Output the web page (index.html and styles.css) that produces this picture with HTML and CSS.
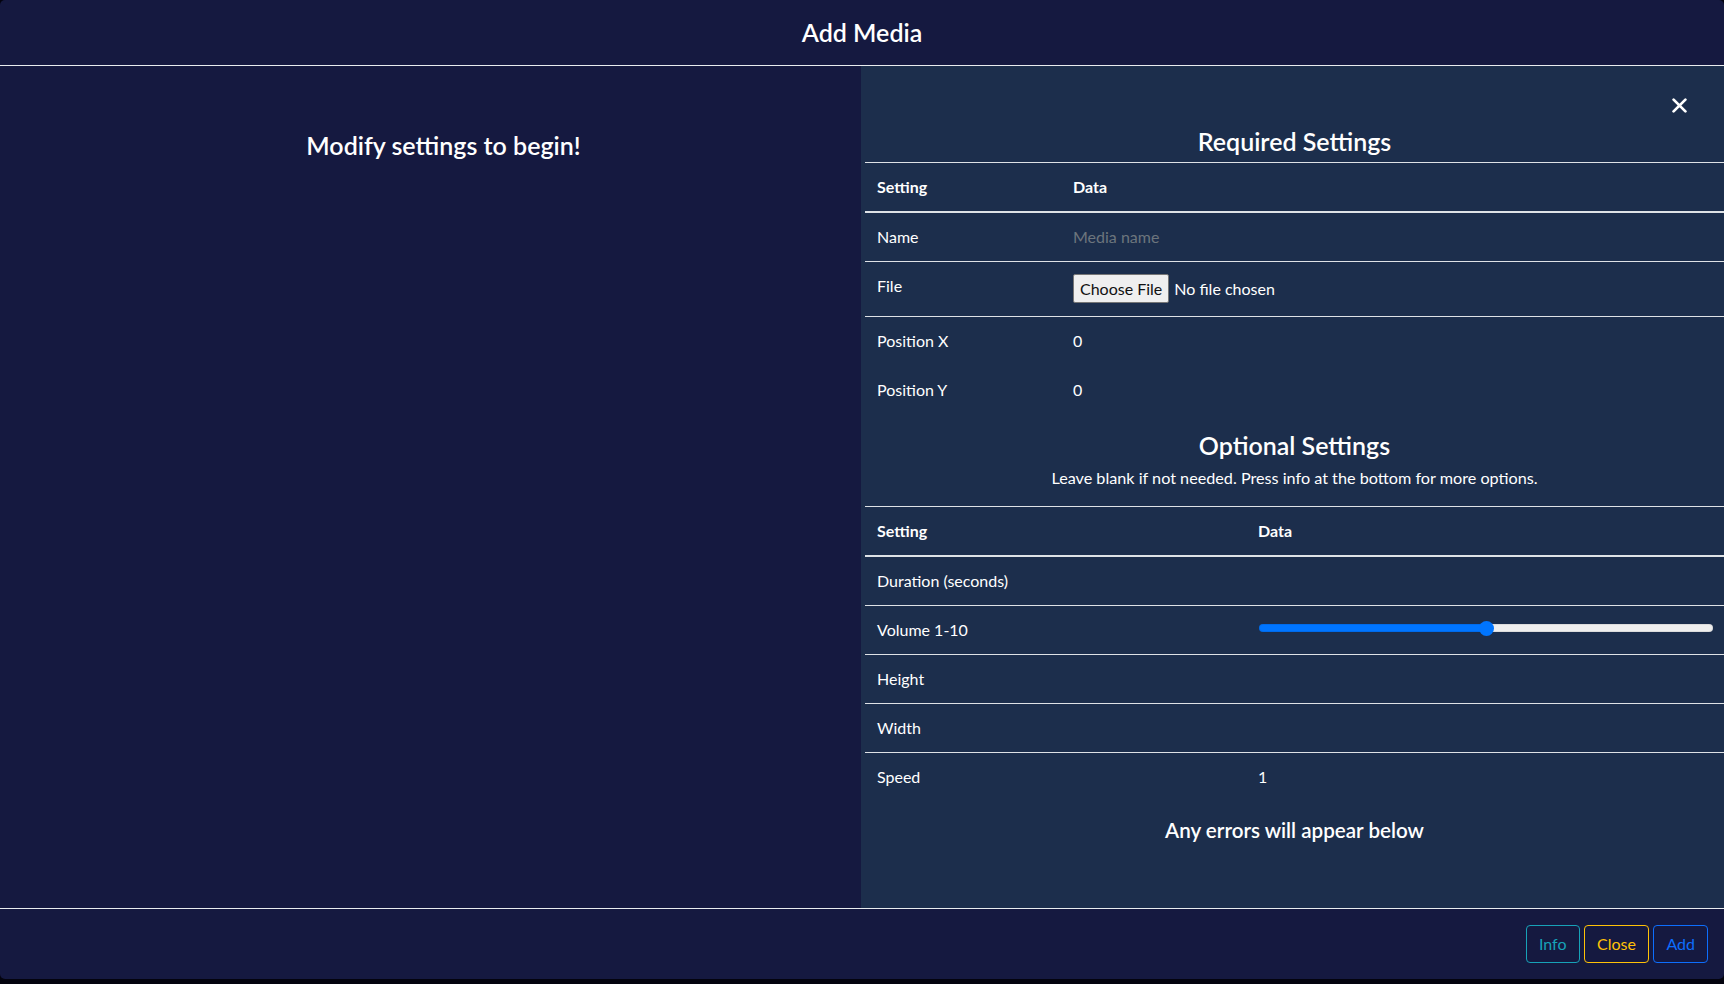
FILE: index.html
```html
<!DOCTYPE html>
<html lang="en">
<head>
<meta charset="utf-8">
<title>Add Media</title>
<link rel="stylesheet" href="styles.css">
</head>
<body>
<div class="modal">
  <header class="modal-header">
    <h1 class="modal-title">Add Media</h1>
  </header>
  <main class="modal-body">
    <section class="preview">
      <h2 class="preview-title">Modify settings to begin!</h2>
    </section>
    <section class="settings">
      <div class="close-row">
        <button class="btn-close" aria-label="Close">
          <svg viewBox="0 0 15 15" width="15" height="15"><path d="M1.6 1.6L13.4 13.4M13.4 1.6L1.6 13.4" stroke="#fff" stroke-width="2.7" stroke-linecap="round" fill="none"/></svg>
        </button>
      </div>
      <h3 class="section-title first">Required Settings</h3>
      <table class="table req">
        <thead>
          <tr><th class="c1">Setting</th><th>Data</th></tr>
        </thead>
        <tbody>
          <tr class="bordered"><td>Name</td><td><input class="text-input" type="text" placeholder="Media name"></td></tr>
          <tr class="bordered file-row"><td>File</td><td><input class="file-input" type="file"></td></tr>
          <tr><td>Position X</td><td>0</td></tr>
          <tr><td>Position Y</td><td>0</td></tr>
        </tbody>
      </table>
      <h3 class="section-title second">Optional Settings</h3>
      <p class="subtitle">Leave blank if not needed. Press info at the bottom for more options.</p>
      <table class="table opt">
        <thead>
          <tr><th class="c1">Setting</th><th>Data</th></tr>
        </thead>
        <tbody>
          <tr class="bordered"><td>Duration (seconds)</td><td></td></tr>
          <tr class="bordered"><td>Volume 1-10</td><td class="range-cell"><input class="range" type="range" min="0" max="10" value="5" style="--pct: 50%"></td></tr>
          <tr class="bordered"><td>Height</td><td></td></tr>
          <tr class="bordered"><td>Width</td><td></td></tr>
          <tr><td>Speed</td><td>1</td></tr>
        </tbody>
      </table>
      <h4 class="errors-title">Any errors will appear below</h4>
    </section>
  </main>
  <footer class="modal-footer">
    <button class="btn btn-info">Info</button>
    <button class="btn btn-warning">Close</button>
    <button class="btn btn-primary">Add</button>
  </footer>
</div>
</body>
</html>
```

FILE: styles.css
```css
* { box-sizing: border-box; }

html, body {
  margin: 0;
  padding: 0;
  height: 100%;
}

body {
  background: #03030e;
  font-family: "Lato", "Segoe UI", "Noto Sans", sans-serif;
  font-size: 16px;
  line-height: 24px;
  color: #ffffff;
  overflow: hidden;
}

.modal {
  height: 979px;
  width: 1724px;
  display: flex;
  flex-direction: column;
  background: #151940;
  border-radius: 5px;
  overflow: hidden;
}

.modal-header {
  height: 66px;
  flex: 0 0 66px;
  border-bottom: 1px solid #e9ecef;
  display: flex;
  align-items: center;
  justify-content: center;
  padding-bottom: 1px;
}

.modal-title {
  margin: 0;
  font-size: 25px;
  font-weight: 600;
  line-height: 30px;
}

.modal-body {
  flex: 1;
  display: grid;
  grid-template-columns: 861px 1fr;
  min-height: 0;
}

.preview {
  padding: 63px 0 0 26px;
  text-align: center;
}

.preview-title {
  margin: 0;
  font-size: 25px;
  font-weight: 600;
  line-height: 32px;
}

.settings {
  background: #1c2e4c;
  padding-left: 4px;
}

.close-row {
  display: flex;
  justify-content: flex-end;
  padding: 32px 37px 0 0;
  height: 47px;
}

.btn-close {
  background: none;
  border: 0;
  padding: 0;
  width: 15px;
  height: 15px;
  display: block;
  cursor: pointer;
}

.btn-close svg { display: block; }

.section-title {
  margin: 0;
  text-align: center;
  font-size: 25px;
  font-weight: 600;
  line-height: 29px;
}

.section-title.first { margin: 14px 0 6px; }
.section-title.second { margin: 16px 0 6px; }

.subtitle {
  margin: 0 0 16px;
  text-align: center;
  font-size: 16.2px;
}

.table {
  width: 100%;
  border-collapse: separate;
  border-spacing: 0;
  border-top: 1px solid #dee2e6;
}

.table th,
.table td {
  padding: 12px;
  text-align: left;
  vertical-align: top;
  height: 49px;
  border-bottom: 1px solid transparent;
}

.table th {
  font-weight: 700;
  height: 50px;
  border-bottom: 2px solid #dee2e6;
}

.table .bordered td {
  border-bottom: 1px solid #dee2e6;
}

.req .c1 { width: 196px; }
.opt .c1 { width: 381px; }

.text-input {
  display: block;
  width: 100%;
  border: 0;
  padding: 0;
  margin: 0;
  background: transparent;
  color: #fff;
  font: inherit;
  line-height: 24px;
  outline: none;
}

.text-input::placeholder { color: #6c757d; }

.file-row td { height: 55px; }

.file-input {
  display: block;
  font: inherit;
  color: #fff;
  margin: 0;
  line-height: 22px;
}

.file-input::file-selector-button {
  font: inherit;
  line-height: 25px;
  padding: 1px 6px;
  margin: 0 5px 0 0;
  background: #efefef;
  color: #111;
  border: 1px solid #767676;
  border-radius: 2px;
}

.range {
  -webkit-appearance: none;
  appearance: none;
  display: block;
  width: 100%;
  height: 16px;
  margin: 2px 0 0 1px;
  padding: 0;
  background: transparent;
}

.range::-webkit-slider-runnable-track {
  height: 8px;
  border-radius: 4px;
  background: linear-gradient(to right, #0075ff var(--pct), #efefef var(--pct));
  box-shadow: inset 0 0 0 1px rgba(0, 0, 0, 0.08);
}

.range::-webkit-slider-thumb {
  -webkit-appearance: none;
  appearance: none;
  width: 15px;
  height: 15px;
  margin-top: -3.5px;
  border-radius: 50%;
  background: #0075ff;
  border: 0;
}

.errors-title {
  margin: 16px 0 0;
  text-align: center;
  font-size: 20.6px;
  font-weight: 600;
  line-height: 25px;
}

.modal-footer {
  flex: 0 0 71px;
  border-top: 1px solid #e9ecef;
  display: flex;
  align-items: center;
  justify-content: flex-end;
  gap: 4.5px;
  padding: 0 16px 0 0;
}

.btn {
  font: inherit;
  font-size: 16px;
  line-height: 24px;
  padding: 6px 12px;
  background: transparent;
  border: 1px solid;
  border-radius: 4px;
  cursor: pointer;
}

.btn-info { color: #17a2b8; border-color: #17a2b8; }
.btn-warning { color: #ffc107; border-color: #ffc107; }
.btn-primary { color: #0d6efd; border-color: #0d6efd; }
```
